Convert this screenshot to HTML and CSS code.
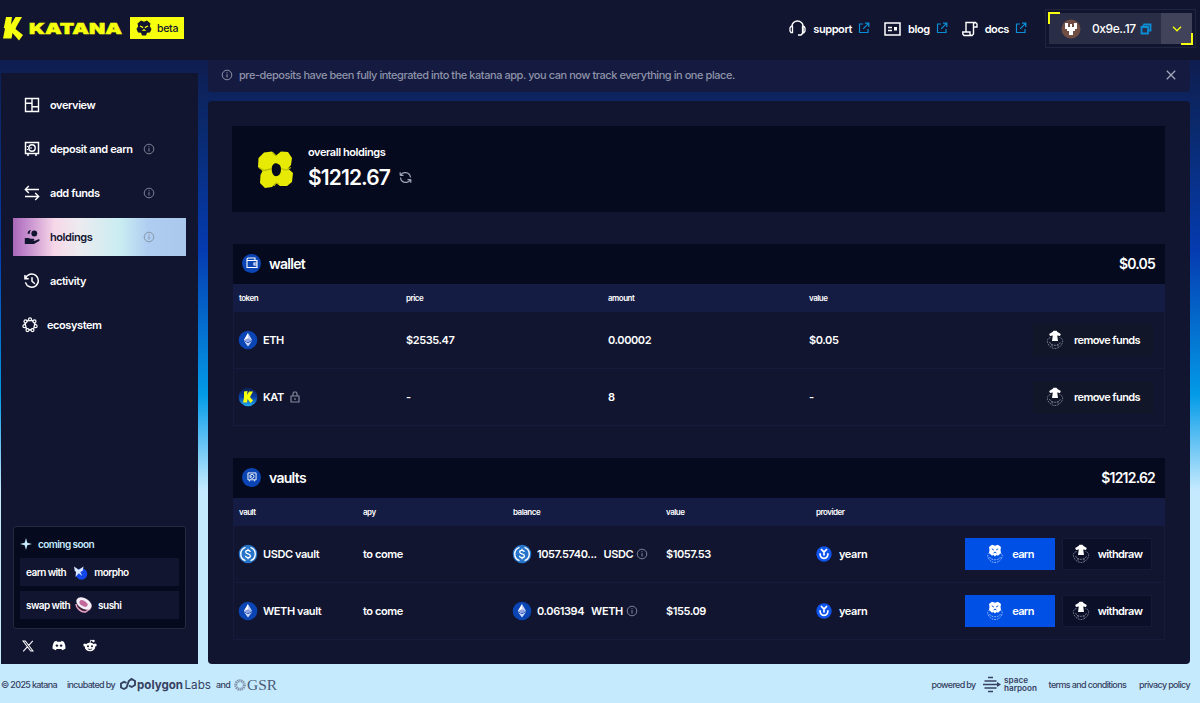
FILE: index.html
```html
<!DOCTYPE html>
<html lang="en">

<head>
  <meta charset="UTF-8">
  <meta name="viewport" content="width=device-width, initial-scale=1.0">
  <title>Katana - holdings</title>
  <link rel="stylesheet" href="styles.css">
</head>

<body>

  <!-- shared icons -->
  <svg class="sprite" width="0" height="0">
    <symbol id="info" viewBox="0 0 12 12">
      <circle cx="6" cy="6" r="4.8" fill="none" stroke="currentColor" stroke-width="1" />
      <path d="M6 5.3v3.2M6 3.3v1" stroke="currentColor" stroke-width="1.1" fill="none" />
    </symbol>
    <symbol id="external" viewBox="0 0 12 12">
      <path d="M5 2H1.5v8.500H10V7M7 1.200h3.800V5M10.600 1.400L5.200 6.800" fill="none" stroke="currentColor" stroke-width="1.200" />
    </symbol>
    <symbol id="katana-mark" viewBox="0 0 20 25">
      <path d="M3 1h6l-1 7.500L12.500 1H19l-5.500 9.500-1 2.500 7.500 6-4 5.500L9.500 17l-1 5.500H0l2-10L.8 12z" fill="#f6ff0d" />
    </symbol>
    <symbol id="vault" viewBox="0 0 16 16">
      <path d="M1.500 1.500h13v11h-13zM4 13v2M12 13v2" fill="none" stroke="currentColor" stroke-width="1.500" />
      <circle cx="8" cy="7" r="3.200" fill="none" stroke="currentColor" stroke-width="1.400" />
      <path d="M8 7H5.500M3.500 5v1M3.500 8v1" stroke="currentColor" stroke-width="1.200" />
    </symbol>
    <symbol id="eth" viewBox="0 0 20 20">
      <circle cx="10" cy="10" r="9.300" fill="#0b45b4" />
      <path d="M10 3l4 7-4 2.300L6 10z" fill="#c9d4fb" />
      <path d="M10 3v9.300L6 10z" fill="#fff" />
      <path d="M10 8.300l4 1.700-4 2.300L6 10z" fill="#8f9fe0" />
      <path d="M6 11l4 2.300 4-2.300-4 5.600z" fill="#d5ddff" />
    </symbol>
    <symbol id="usdc" viewBox="0 0 20 20">
      <circle cx="10" cy="10" r="9.300" fill="#2775ca" />
      <path d="M7.500 3.300a7.100 7.100 0 0 0 0 13.400M12.500 3.300a7.100 7.100 0 0 1 0 13.400" fill="none" stroke="#fff" stroke-width="1.400" />
      <path d="M12.300 8c-.2-1.200-1-1.700-2.300-1.700S7.700 7 7.700 8c0 2.500 4.700 1.300 4.700 3.900 0 1.100-1 1.800-2.400 1.800s-2.400-.7-2.500-1.900M10 4.800v1.500M10 13.700v1.500" fill="none" stroke="#fff" stroke-width="1.300" />
    </symbol>
    <symbol id="kat" viewBox="0 0 20 20">
      <linearGradient id="katBg" x1="0" y1="0" x2="0" y2="1">
        <stop offset="0" stop-color="#10204e" />
        <stop offset=".5" stop-color="#0a3ea5" />
        <stop offset="1" stop-color="#20b0f5" />
      </linearGradient>
      <circle cx="10" cy="10" r="9.300" fill="url(#katBg)" />
      <path d="M6 4.500l3.500-.5-.4 4L11 4.500h4l-3 5.500 3 3.500-2.500 2.500-3-4-.5 3.500H5l1-5z" fill="#f6ff0d" />
    </symbol>
    <symbol id="yearn" viewBox="0 0 16 16">
      <circle cx="8" cy="8" r="7.700" fill="#0f54ec" />
      <path d="M5 3l3 3.200L11 3M8 6v3.600M4.300 7.300a3.900 3.900 0 1 0 7.400 0" fill="none" stroke="#fff" stroke-width="1.700" />
    </symbol>
    <symbol id="remove" viewBox="0 0 18 20">
      <g fill="none" stroke="#8b90a5" stroke-width=".8">
        <path d="M4.500 7.500C2 8 .8 10 1.500 12.500S5 18.500 9 18.500s6.800-3.500 7.500-6S16 8 13.500 7.500" stroke-dasharray="1.800 .9" />
        <path d="M3.500 12c1 2.500 3 3.300 5.500 3.300s4.500-.8 5.500-3.300M6 14.500V17M12 14.500V17" stroke-dasharray="2 .8" />
      </g>
      <path d="M7.500.8h3l1 1.200 3.300 2-.8 2-2.800-.4.8 5.400H6l.8-5.400L4 6l-.8-2 3.300-2z" fill="#fff" />
    </symbol>
    <symbol id="earn" viewBox="0 0 18 20">
      <g fill="none" stroke="#a9c6ff" stroke-width=".8">
        <path d="M3.500 9C1 10 1.300 13 3 15.200s3.500 3.300 6 3.300 4.500-1.200 6-3.300S17 10 14.500 9" stroke-dasharray="1.800 .9" />
        <path d="M3.500 13c1 2 3 2.800 5.500 2.800s4.500-.8 5.500-2.800" stroke-dasharray="2 .8" />
      </g>
      <path d="M6 .8l3 1 3-1 3 2.200-.5 3 .5 2.900-3 2.800-1.500-.6L9 12.500l-1.500-1.400-1.500.6-3-2.800.5-2.900L3 3z" fill="#fff" />
      <path d="M5.800 4.800l2 1.200M12.200 4.800l-2 1.200M7.600 9L9 8l1.400 1" fill="none" stroke="#0750e4" stroke-width="1" />
    </symbol>
  </svg>

  <header class="topbar">
    <div class="brand">
      <svg width="20" height="25"><use href="#katana-mark" /></svg>
      <svg class="wordmark" width="94" height="20">
        <text x="0" y="15" textLength="93" lengthAdjust="spacingAndGlyphs">KATANA</text>
      </svg>
      <span class="beta">
        <svg width="16" height="16" viewBox="0 0 16 16">
          <path d="M5 .5l3 1.300L11 .5l3.500 3-.7 2.800L15.500 9 14 12.500l-3 .3-1 2.700H6l-1-2.700-3-.3L.5 9l1.700-2.700L1.500 3.500z" fill="#111530" />
          <path d="M4 6l3.200 1.600M12 6L8.800 7.600M6.500 10.800L8 9.800l1.500 1" fill="none" stroke="#f6ff0d" stroke-width="1.200" />
        </svg>
        beta
      </span>
    </div>
    <nav class="links">
      <a class="link">
        <svg width="17" height="17" viewBox="0 0 17 17">
          <path d="M3 7V6a5.500 5 0 0 1 11 0v7l-2 2H9" fill="none" stroke="#fff" stroke-width="1.500" />
          <path d="M3.500 6.500H2L1 8v3l1 1.500h1.500zM13.500 6.500H15L16 8v3l-1 1.500h-1.500z" fill="none" stroke="#fff" stroke-width="1.300" />
        </svg>
        <span>support</span>
        <svg class="ext" width="12" height="12"><use href="#external" /></svg>
      </a>
      <a class="link">
        <svg width="17" height="14" viewBox="0 0 17 14">
          <path d="M1 1h15v12H1z" fill="none" stroke="#fff" stroke-width="1.500" />
          <path d="M4 5.500h4M4 8.500h4" stroke="#fff" stroke-width="1.400" />
          <path d="M10 5h3v3.500h-3z" fill="#fff" />
        </svg>
        <span>blog</span>
        <svg class="ext" width="12" height="12"><use href="#external" /></svg>
      </a>
      <a class="link">
        <svg width="16" height="16" viewBox="0 0 16 16">
          <path d="M4 11V1.500h9.500L15 3v3h-3.500V3l1-1.500M11.500 6v7L10 14.500H2L.8 13v-2H8v2.500l1.500 1" fill="none" stroke="#fff" stroke-width="1.400" />
        </svg>
        <span>docs</span>
        <svg class="ext" width="12" height="12"><use href="#external" /></svg>
      </a>
    </nav>
    <div class="account">
      <div class="account-id">
        <svg width="20" height="20" viewBox="0 0 20 20">
          <circle cx="10" cy="10" r="9.500" fill="#704e43" />
          <path d="M4 4h3v4h2V5h2v3h2V4h3v6h-2v2h-2v4H8v-4H6v-2H4z" fill="#fff" />
        </svg>
        <span>0x9e..17</span>
        <svg width="12" height="12" viewBox="0 0 12 12">
          <path d="M3.500 1.500h7v6h-2M3.500 1.500v2" fill="none" stroke="#0b8ed6" stroke-width="1.800" />
          <path d="M1.500 4h6.500v6.500H1.500z" fill="none" stroke="#0b8ed6" stroke-width="1.800" />
        </svg>
      </div>
      <div class="account-toggle">
        <svg width="10" height="6" viewBox="0 0 10 6"><path d="M1 .8l4 4 4-4" fill="none" stroke="#f6ff0d" stroke-width="1.300" /></svg>
      </div>
    </div>
  </header>

  <div class="layout">
    <aside class="sidebar">
      <nav class="menu">
        <a class="item">
          <svg width="16" height="16" viewBox="0 0 16 16"><path d="M1.500 1.500h13v13h-13zM8 1.500v13M1.500 6.200H8M8 9.800h6.500" fill="none" stroke="#fff" stroke-width="1.400" /></svg>
          <span>overview</span>
        </a>
        <a class="item">
          <svg width="16" height="16"><use href="#vault" /></svg>
          <span>deposit and earn</span>
          <svg class="info" width="12" height="12"><use href="#info" /></svg>
        </a>
        <a class="item">
          <svg width="16" height="16" viewBox="0 0 16 16"><path d="M15 4.500H1.500M4.800 1L1.300 4.500 4.800 8M1 11.500h13.500M11.200 8l3.500 3.500-3.500 3.500" fill="none" stroke="#fff" stroke-width="1.400" /></svg>
          <span>add funds</span>
          <svg class="info" width="12" height="12"><use href="#info" /></svg>
        </a>
        <a class="item active">
          <svg width="16" height="16" viewBox="0 0 16 16">
            <circle cx="10.300" cy="4.500" r="2.900" fill="#111530" />
            <path d="M6.500 1C4.500 1.300 3.500 2.500 3.700 5L6 4.500c-.5-1.300 0-2 .8-2.800zM.8 9h3.700l2 .8h3c1 0 1 1.700 0 1.700H7.500l3.500.2 3.500-1.500c1.500-.2 1.500 1 .6 1.700L10 15H.8z" fill="#111530" />
          </svg>
          <span>holdings</span>
          <svg class="info" width="12" height="12"><use href="#info" /></svg>
        </a>
        <a class="item">
          <svg width="16" height="16" viewBox="0 0 17 17"><path d="M1 2v4h4M1.600 5.800A7 7 0 1 1 1.500 10M8.500 4.500v4.200l3 2.800" fill="none" stroke="#fff" stroke-width="1.600" /></svg>
          <span>activity</span>
        </a>
        <a class="item narrow">
          <svg width="16" height="16" viewBox="0 0 16 16">
            <circle cx="8" cy="8" r="4.900" fill="none" stroke="#fff" stroke-width="1.600" />
            <g fill="#111530" stroke="#fff" stroke-width="1.200">
              <circle cx="8" cy="2.300" r="1.500" /><circle cx="12.500" cy="4.400" r="1.500" /><circle cx="13.600" cy="9.200" r="1.500" /><circle cx="10.500" cy="13.100" r="1.500" />
              <circle cx="5.500" cy="13.100" r="1.500" /><circle cx="2.400" cy="9.200" r="1.500" /><circle cx="3.500" cy="4.400" r="1.500" />
            </g>
          </svg>
          <span>ecosystem</span>
        </a>
      </nav>

      <div class="soon">
        <div class="soon-title">
          <svg width="12" height="12" viewBox="0 0 12 12"><path d="M6 0l1.300 4.700L12 6 7.300 7.300 6 12 4.700 7.300 0 6l4.700-1.300z" fill="#c5eafe" /></svg>
          coming soon
        </div>
        <div class="soon-row">
          <span>earn with</span>
          <svg width="18" height="18" viewBox="0 0 18 18">
            <circle cx="10.500" cy="11" r="5.800" fill="#1247e8" />
            <path d="M3 3.500l4.800 3.300L12.500 3.500l-.8 4.300L9.300 9l2 4-3.500-2.800L4.500 14l.6-5L3.800 8z" fill="#d9e8ff" />
          </svg>
          <span>morpho</span>
        </div>
        <div class="soon-row">
          <span>swap with</span>
          <svg width="18" height="18" viewBox="0 0 18 18">
            <path d="M1 8c0 5 5 9 9.500 8.500L17 12l-.5-4z" fill="#3b2138" />
            <path d="M1 8c0 4 5 8.500 9.500 8l5-3.500" fill="none" stroke="#e9a5c5" stroke-width="1.500" />
            <ellipse cx="9" cy="7.500" rx="8.300" ry="5.300" transform="rotate(30 9 7.500)" fill="#f5eef8" />
            <ellipse cx="8.500" cy="7.500" rx="4.500" ry="2.600" transform="rotate(30 8.500 7.500)" fill="#c26a9b" />
          </svg>
          <span>sushi</span>
        </div>
      </div>

      <div class="social">
        <svg width="12" height="12" viewBox="0 0 12 12"><path d="M1 1h2.300L11 11H8.700zM10.800.8L6.700 5.400M5.300 6.800L1.200 11.300" fill="none" stroke="#fff" stroke-width="1.100" /></svg>
        <svg width="14" height="11" viewBox="0 0 14 11">
          <path d="M4.500.8L2.200 1.700C.8 4 .4 6.300.6 8.700l3.200 1.600.8-1.300h4.800l.8 1.300 3.200-1.600c.2-2.400-.2-4.700-1.600-7L9.500.8 9 1.700H5z" fill="#fff" />
          <circle cx="4.900" cy="5.600" r="1.200" fill="#111530" /><circle cx="9.100" cy="5.600" r="1.200" fill="#111530" />
        </svg>
        <svg width="14" height="13" viewBox="0 0 14 13">
          <circle cx="1.900" cy="6" r="1.600" fill="#fff" /><circle cx="12.100" cy="6" r="1.600" fill="#fff" />
          <ellipse cx="7" cy="8" rx="5.200" ry="4.300" fill="#fff" />
          <path d="M7 4l.7-2.800 2.500.6" fill="none" stroke="#fff" stroke-width=".9" />
          <circle cx="10.500" cy="2" r="1.200" fill="#fff" />
          <circle cx="5" cy="7.200" r="1" fill="#111530" /><circle cx="9" cy="7.200" r="1" fill="#111530" />
          <path d="M4.900 9.800c1.200.9 3 .9 4.200 0" fill="none" stroke="#111530" stroke-width=".8" />
        </svg>
      </div>
    </aside>

    <div class="content">
      <div class="banner">
        <svg width="12" height="12"><use href="#info" /></svg>
        <span>pre-deposits have been fully integrated into the katana app. you can now track everything in one place.</span>
        <svg class="close" width="10" height="10" viewBox="0 0 10 10"><path d="M.8.8l8.400 8.400M9.200.8L.8 9.200" stroke="#a2a6b8" stroke-width="1.300" /></svg>
      </div>

      <main class="panel">
        <section class="overall">
          <svg width="38" height="38" viewBox="0 0 38 38">
            <path fill-rule="evenodd" d="M7 2.500l8-1 4 4 5-4 7 .5 4 6-1 7-3 3.500 5 4.500-1 9-5 4h-7l-4-3-4 4-7 1-5-5 .5-8 2-4-4.500-4 .5-9zM20 13.500c-3-1-5.500 2-5.300 6s2 6.700 4.300 6.700c3.500 0 5-3.500 5-7.200 0-3-1.500-5-4-5.500z" fill="#e6ea04" />
            <path d="M2 17.500l5 3 7-1.500M34 17.500l-5 2.500-5-1.500M17 36l2-3 3 1M15.500 2.500L19 6" fill="none" stroke="#b9bd00" stroke-width="1.300" />
          </svg>
          <div>
            <div class="overall-label">overall holdings</div>
            <div class="overall-value">
              <span>$1212.67</span>
              <svg width="13" height="13" viewBox="0 0 13 13"><path d="M1.200 4.500V1.200M1.200 4.300h3.300M1.500 4.200C3 1.500 7.500.5 10 3c1 1 1.400 2.100 1.500 3.500M11.800 8.500v3.300M11.800 8.700H8.500M11.500 8.800C10 11.500 5.500 12.500 3 10c-1-1-1.400-2.100-1.500-3.500" fill="none" stroke="#a2a6b8" stroke-width="1.200" /></svg>
            </div>
          </div>
        </section>

        <section class="card wallet">
          <div class="card-head">
            <span class="badge">
              <svg width="12" height="12" viewBox="0 0 12 12"><path d="M9 3V1H2L1 2v8.500h10V3.500H1.500M11 6H8v2h3" fill="none" stroke="#fff" stroke-width="1.100" /></svg>
            </span>
            <h2>wallet</h2>
            <span class="total">$0.05</span>
          </div>
          <div class="row head">
            <span>token</span><span>price</span><span>amount</span><span>value</span>
          </div>
          <div class="row">
            <span class="cell"><svg width="20" height="20"><use href="#eth" /></svg>ETH</span>
            <span>$2535.47</span>
            <span>0.00002</span>
            <span>$0.05</span>
            <button class="remove"><svg width="18" height="20"><use href="#remove" /></svg>remove funds</button>
          </div>
          <div class="row">
            <span class="cell">
              <svg width="20" height="20"><use href="#kat" /></svg>KAT
              <svg class="lock" width="10" height="12" viewBox="0 0 10 12"><path d="M1 5h8v6H1zM3 5V2.500L4 1h2l1 1.500V5M5 7v2" fill="none" stroke="#85899c" stroke-width="1.200" /></svg>
            </span>
            <span>-</span>
            <span>8</span>
            <span>-</span>
            <button class="remove"><svg width="18" height="20"><use href="#remove" /></svg>remove funds</button>
          </div>
        </section>

        <section class="card vaults">
          <div class="card-head">
            <span class="badge"><svg width="10" height="10"><use href="#vault" /></svg></span>
            <h2>vaults</h2>
            <span class="total">$1212.62</span>
          </div>
          <div class="row head">
            <span>vault</span><span>apy</span><span>balance</span><span>value</span><span>provider</span>
          </div>
          <div class="row">
            <span class="cell"><svg width="20" height="20"><use href="#usdc" /></svg>USDC vault</span>
            <span>to come</span>
            <span class="cell"><svg width="20" height="20"><use href="#usdc" /></svg>1057.5740...<span class="unit">USDC</span><svg class="info" width="12" height="12"><use href="#info" /></svg></span>
            <span>$1057.53</span>
            <span class="cell provider"><svg width="16" height="16"><use href="#yearn" /></svg>yearn</span>
            <span class="actions">
              <button class="earn"><svg width="18" height="20"><use href="#earn" /></svg>earn</button>
              <button class="withdraw"><svg width="18" height="20"><use href="#remove" /></svg>withdraw</button>
            </span>
          </div>
          <div class="row">
            <span class="cell"><svg width="20" height="20"><use href="#eth" /></svg>WETH vault</span>
            <span>to come</span>
            <span class="cell"><svg width="20" height="20"><use href="#eth" /></svg>0.061394<span class="unit">WETH</span><svg class="info" width="12" height="12"><use href="#info" /></svg></span>
            <span>$155.09</span>
            <span class="cell provider"><svg width="16" height="16"><use href="#yearn" /></svg>yearn</span>
            <span class="actions">
              <button class="earn"><svg width="18" height="20"><use href="#earn" /></svg>earn</button>
              <button class="withdraw"><svg width="18" height="20"><use href="#remove" /></svg>withdraw</button>
            </span>
          </div>
        </section>
      </main>
    </div>
  </div>

  <footer class="footer">
    <span class="copy">© 2025 katana</span>
    <span class="incubated">incubated by</span>
    <svg class="polygon" width="92" height="16" viewBox="0 0 92 16">
      <path d="M6.500 5.800L4 4.800 1 6.500v4L4 12l2.500-1.500L8.800 4 11.500 2 15 4v4l-3.300 2L9 8.700" fill="none" stroke="#36415f" stroke-width="1.900" />
      <text class="polygon-name" x="17" y="12" textLength="46" lengthAdjust="spacingAndGlyphs">polygon</text>
      <text class="polygon-labs" x="64.500" y="12" textLength="26.500" lengthAdjust="spacingAndGlyphs">Labs</text>
    </svg>
    <span class="and">and</span>
    <svg class="gsr" width="44" height="16" viewBox="0 0 44 16">
      <circle cx="6" cy="8" r="4.300" fill="none" stroke="#8293a8" stroke-width="3" stroke-dasharray="1.300 .6" />
      <text x="13" y="13" textLength="30" lengthAdjust="spacingAndGlyphs">GSR</text>
    </svg>
    <span class="powered">powered by</span>
    <svg class="harpoon" width="56" height="20" viewBox="0 0 56 20">
      <path d="M6 2.500h5M2.500 6h12M1 9.500h14M2.500 13h12M6 16.500h5" stroke="#36415f" stroke-width="1.600" />
      <path d="M15 7l4 2.500-4 2.500z" fill="#36415f" />
      <text x="22" y="8" textLength="24" lengthAdjust="spacingAndGlyphs">space</text>
      <text x="22" y="16" textLength="33" lengthAdjust="spacingAndGlyphs">harpoon</text>
    </svg>
    <span class="terms">terms and conditions</span>
    <span class="privacy">privacy policy</span>
  </footer>

</body>

</html>
```

FILE: styles.css
```css
* {
  box-sizing: border-box;
}

body {
  margin: 0;
  height: 703px;
  overflow: hidden;
  display: flex;
  flex-direction: column;
  font-family: Inter, "Liberation Sans", sans-serif;
  font-size: 11px;
  font-weight: 600;
  letter-spacing: -0.42px;
  color: #fff;
  background: linear-gradient(#0f1d50 60px, #0a2a6e 130px, #053bb0 250px, #039be8 395px, #c5eafe 490px);
}

svg {
  flex: none;
  display: block;
}

.sprite {
  position: absolute;
}

.info {
  color: #7d8296;
}

.topbar {
  height: 60px;
  flex: none;
  display: flex;
  align-items: center;
  padding: 0 4px 3px 3px;
  background: #111530;
}

.brand {
  display: flex;
  align-items: center;
}

.wordmark {
  margin-left: 6px;
  overflow: visible;
}

.wordmark text {
  font-size: 15px;
  font-weight: 900;
  letter-spacing: 0;
  fill: #f6ff0d;
  stroke: #f6ff0d;
  stroke-width: 0.5px;
}

.beta {
  display: flex;
  align-items: center;
  gap: 5px;
  width: 54px;
  height: 22px;
  margin: 0 0 1px 7px;
  padding-left: 6px;
  background: #f6ff0d;
  color: #111530;
  font-size: 10.5px;
  font-weight: 500;
  letter-spacing: -0.3px;
}

.links {
  display: flex;
  gap: 14px;
  margin-left: auto;
}

.link {
  display: flex;
  align-items: center;
}

.link span {
  margin: 0 6px 0 7px;
}

.ext {
  color: #0b8ed6;
  margin-bottom: 2px;
}

.account {
  position: relative;
  display: flex;
  width: 151px;
  height: 39px;
  margin-left: 18px;
  padding: 3px;
  border: 1px solid #20243f;
  font-size: 12px;
  font-weight: 500;
}

.account::before,
.account::after {
  content: "";
  position: absolute;
  width: 10px;
  height: 10px;
}

.account::before {
  left: 2px;
  top: 2px;
  border-left: 2px solid #f6ff0d;
  border-top: 2px solid #f6ff0d;
}

.account::after {
  right: 2px;
  bottom: 2px;
  border-right: 2px solid #f6ff0d;
  border-bottom: 2px solid #f6ff0d;
}

.account-id {
  flex: 1;
  display: flex;
  align-items: center;
  padding-left: 12px;
  background: #292d45;
}

.account-id span {
  margin: 0 4px 0 11px;
}

.account-toggle {
  width: 31px;
  display: flex;
  align-items: center;
  justify-content: center;
  background: #40435a;
}

.layout {
  flex: none;
  display: flex;
  height: 604px;
  padding: 0 10px 0 1px;
}

.sidebar {
  width: 197px;
  margin-top: 13px;
  padding: 13px 12px 12px;
  display: flex;
  flex-direction: column;
  background: #111530;
}

.menu {
  display: flex;
  flex-direction: column;
  gap: 6px;
}

.item {
  display: flex;
  align-items: center;
  height: 38px;
  padding-left: 11px;
}

.item span {
  margin-left: 10px;
}

.item .info {
  margin-left: auto;
  margin-right: 31px;
}

.item.active {
  color: #111530;
  background: linear-gradient(90deg, #a867b9, #c48bcd 8%, #f7d7e8 24%, #ecebef 38%, #c9edf2 62%, #afcdf1 78%, #a9c8ec);
}

.item.active .info {
  color: #8797ab;
}

.item.narrow {
  height: 37px;
  padding-left: 9px;
}

.item.narrow span {
  margin-left: 9px;
}

.soon {
  height: 103px;
  margin-top: auto;
  padding: 9px 6px;
  border: 1px solid #262a40;
  border-radius: 3px;
  background: #050a1f;
  font-size: 10px;
  letter-spacing: -0.55px;
}

.soon-title {
  display: flex;
  align-items: center;
  gap: 6px;
  height: 16px;
  margin-bottom: 6px;
  color: #c5eafe;
}

.soon-row {
  display: flex;
  align-items: center;
  gap: 5px;
  height: 28px;
  margin-bottom: 5px;
  padding-left: 6px;
  background: #111530;
}

.social {
  display: flex;
  align-items: center;
  gap: 17px;
  padding: 10px 0 0 9px;
}

.social svg:first-child {
  margin-right: 1px;
}

.content {
  width: 982px;
  margin-left: 10px;
}

.banner {
  display: flex;
  align-items: center;
  height: 32px;
  margin-bottom: 9px;
  padding: 0 14px 2px 13px;
  border-radius: 0 0 4px 4px;
  background: #151b40;
  color: #8e92a8;
  font-weight: 500;
  letter-spacing: -0.45px;
}

.banner span {
  margin-left: 6px;
}

.close {
  margin-left: auto;
}

.panel {
  height: 563px;
  padding: 25px 25px 0 24px;
  border-radius: 4px;
  background: #111530;
}

.overall {
  display: flex;
  align-items: center;
  height: 86px;
  margin-bottom: 32px;
  padding-left: 25px;
  background: #050a1f;
}

.overall > div {
  margin-left: 13px;
}

.overall-label {
  line-height: 16px;
}

.overall-value {
  display: flex;
  align-items: center;
  gap: 9px;
  height: 34px;
  font-size: 21px;
  letter-spacing: -0.9px;
}

.card {
  margin: 0 0 32px 1px;
}

.card-head {
  display: flex;
  align-items: center;
  height: 40px;
  padding: 0 10px 2px 9px;
  background: #050a1f;
}

.card-head h2,
.total {
  margin: 0;
  font-size: 14px;
  font-weight: 600;
  letter-spacing: -0.7px;
}

.total {
  margin-left: auto;
  letter-spacing: -0.8px;
}

.badge {
  display: flex;
  align-items: center;
  justify-content: center;
  width: 19px;
  height: 19px;
  margin-right: 8px;
  border-radius: 50%;
  background: #0b45b4;
}

.row {
  display: grid;
  align-items: center;
  height: 57px;
  padding-left: 5px;
  border: 1px solid #171b3b;
  border-top: none;
}

.row.head {
  height: 28px;
  border: none;
  padding: 0 0 1px 6px;
  background: #151c43;
  font-size: 8px;
  letter-spacing: -0.5px;
}

.wallet .row {
  grid-template-columns: 167px 202px 201px 1fr auto;
}

.vaults .row {
  grid-template-columns: 124px 150px 153px 150px 149px 1fr;
}

.cell {
  display: flex;
  align-items: center;
  gap: 5px;
}

.cell > svg:first-child {
  margin-left: -1px;
}

.lock {
  margin-left: 1px;
}

.unit {
  margin-left: 2px;
}

.cell .info {
  margin-left: -2px;
}

.cell.provider {
  gap: 7px;
}

.cell.provider > svg {
  margin-left: 0;
}

button {
  display: flex;
  align-items: center;
  justify-content: center;
  gap: 8px;
  height: 32px;
  padding: 0;
  border: none;
  color: #fff;
  font: inherit;
  letter-spacing: -0.6px;
}

.remove {
  width: 120px;
  margin-right: 11px;
  gap: 10px;
  background: #111628;
}

.actions {
  display: flex;
  gap: 7px;
}

.earn {
  width: 90px;
  background: #0050e6;
}

.withdraw {
  width: 90px;
  border: 1px solid #161a35;
  background: #0b0f28;
}

.footer {
  flex: none;
  display: flex;
  align-items: center;
  height: 39px;
  padding: 2px 10px 0 1px;
  color: #36415f;
  font-size: 9px;
  font-weight: 500;
  letter-spacing: -0.65px;
  white-space: nowrap;
}

.incubated {
  margin-left: 10px;
}

.polygon {
  margin-left: 5px;
}

.polygon text {
  font-size: 12px;
  letter-spacing: 0;
  fill: #36415f;
}

.polygon-name {
  font-weight: 700;
}

.polygon-labs {
  font-weight: 400;
}

.and {
  margin-left: 4px;
}

.gsr {
  margin-left: 4px;
}

.gsr text {
  font-family: "Liberation Serif", serif;
  font-size: 14.5px;
  letter-spacing: 0;
  fill: #4a5a75;
}

.powered {
  margin-left: auto;
}

.harpoon {
  margin: 0 11px 0 6px;
  overflow: visible;
}

.harpoon text {
  font-size: 8px;
  font-weight: 600;
  letter-spacing: 0;
  fill: #36415f;
}

.privacy {
  margin-left: 13px;
}
```
